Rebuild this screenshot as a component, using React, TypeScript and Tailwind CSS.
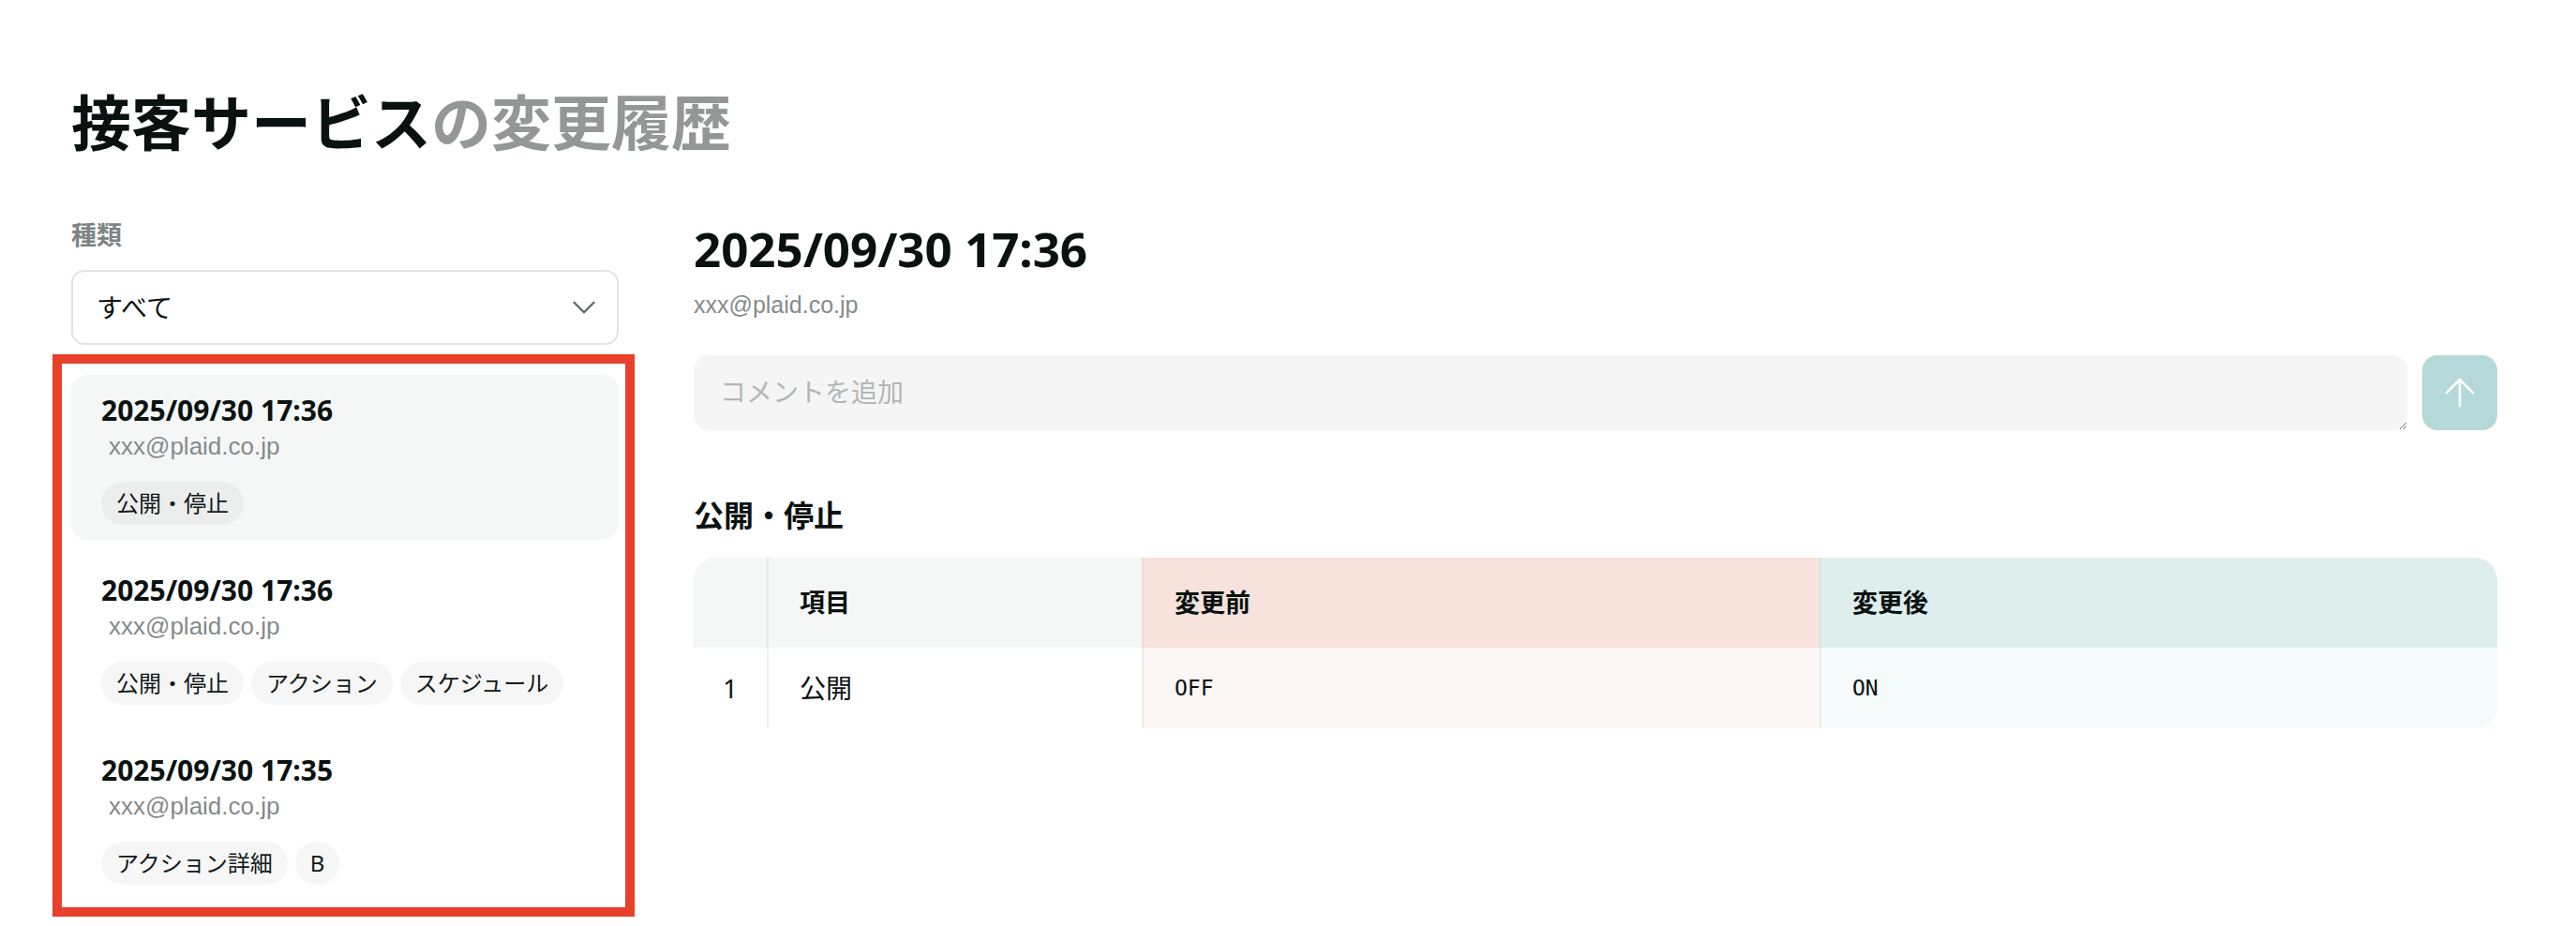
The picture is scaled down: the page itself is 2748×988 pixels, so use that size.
import { ArrowUp, ChevronDown } from 'lucide-react';

type Item = { date: string; tags: string[]; selected?: boolean };

const items: Item[] = [
  { date: '2025/09/30 17:36', tags: ['公開・停止'], selected: true },
  { date: '2025/09/30 17:36', tags: ['公開・停止', 'アクション', 'スケジュール'] },
  { date: '2025/09/30 17:35', tags: ['アクション詳細', 'B'] },
];

function HistoryCard({ item }: { item: Item }) {
  return (
    <div
      className={
        item.selected
          ? 'h-[176px] rounded-[18px] bg-[#f5f7f7] px-8 pt-4'
          : 'h-[176px] rounded-[18px] bg-white px-8 pt-4'
      }
    >
      <div className="text-[30px] leading-[44px] font-bold text-[#0a1211]">{item.date}</div>
      <div className="ml-2 font-['Liberation_Sans',sans-serif] text-[26px] leading-[32px] text-[#858a8a]">
        xxx@plaid.co.jp
      </div>
      <div className="mt-[22px] flex gap-2">
        {item.tags.map((t, i) => (
          <span
            key={i}
            className="flex h-[46px] items-center rounded-full bg-black/[0.035] px-4 text-[24px] leading-none text-[#111818]"
          >
            {t}
          </span>
        ))}
      </div>
    </div>
  );
}

export default function App() {
  return (
    <div className="min-h-[988px] bg-white pl-[76px] pr-[84px] font-['Noto_Sans','Noto_Sans_CJK_JP',sans-serif] text-[#0a1211]">
      <h1 className="pt-[95px] font-['Noto_Sans_CJK_JP',sans-serif] text-[64px] leading-[64px] font-bold">
        接客サービス<span className="text-[#939897]">の変更履歴</span>
      </h1>

      <div className="mt-[72px] flex gap-[80px]">
        <aside className="w-[584px] shrink-0">
          <div className="text-[27px] leading-[39px] font-bold text-[#7d8483]">種類</div>
          <div className="mt-[18px] flex h-[80px] items-center justify-between rounded-[14px] border-2 border-[#e3e3e3] pl-[25px] pr-[14px]">
            <span className="text-[28px] leading-none">すべて</span>
            <ChevronDown size={42} strokeWidth={1.4} className="text-[#636b6b]" />
          </div>

          <div className="mt-[10px] -ml-[20px] -mr-[17px] flex flex-col gap-4 border-[10px] border-[#e8402a] pt-[12px] pb-[8px] pl-[10px] pr-[7px]">
            {items.map((it, i) => (
              <HistoryCard key={i} item={it} />
            ))}
          </div>
        </aside>

        <main className="min-w-0 flex-1">
          <div className="text-[51px] leading-[68px] font-bold text-[#0a1111]">2025/09/30 17:36</div>
          <div className="mt-[8px] font-['Liberation_Sans',sans-serif] text-[25px] leading-[36px] text-[#858a8a]">
            xxx@plaid.co.jp
          </div>

          <div className="mt-[36px] flex gap-4">
            <textarea
              placeholder="コメントを追加"
              className="h-[80px] min-w-0 flex-1 rounded-2xl bg-[#f5f5f5] px-[28px] pt-[18px] pb-[10px] text-[28px] leading-[42px] outline-none placeholder:text-[#b3b6b6]"
            />
            <button className="flex h-[80px] w-[80px] shrink-0 items-center justify-center rounded-2xl bg-[#b5d9d9]">
              <ArrowUp size={48} strokeWidth={1.3} color="#ffffff" />
            </button>
          </div>

          <h2 className="mt-[67px] text-[32px] leading-[48px] font-bold">公開・停止</h2>

          <div className="mt-[21px] grid grid-cols-[78px_400px_1fr_1fr] overflow-hidden rounded-[24px]">
            <div className="h-[96px] bg-[#f5f7f7]" />
            <div className="flex h-[96px] items-center border-l-2 border-black/[0.06] bg-[#f5f7f7] pl-[33px] text-[27px] font-bold">
              項目
            </div>
            <div className="flex h-[96px] items-center border-l-2 border-black/[0.04] bg-[#f7e3dc] pl-[33px] text-[27px] font-bold">
              変更前
            </div>
            <div className="flex h-[96px] items-center border-l-2 border-black/[0.04] bg-[#ddeeed] pl-[33px] text-[27px] font-bold">
              変更後
            </div>

            <div className="flex h-[86px] items-center justify-center bg-white text-[28px]">1</div>
            <div className="flex h-[86px] items-center border-l-2 border-black/[0.06] bg-white pl-[33px] text-[28px]">
              公開
            </div>
            <div className="flex h-[86px] items-center border-l-2 border-black/[0.05] bg-[#fcf6f4] pl-[33px] font-['DejaVu_Sans_Mono',monospace] text-[23px]">
              OFF
            </div>
            <div className="flex h-[86px] items-center border-l-2 border-black/[0.05] bg-[#f5fafa] pl-[33px] font-['DejaVu_Sans_Mono',monospace] text-[23px]">
              ON
            </div>
          </div>
        </main>
      </div>
    </div>
  );
}
